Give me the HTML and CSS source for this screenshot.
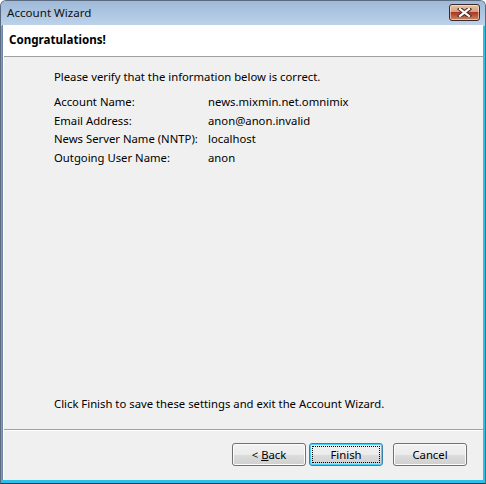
FILE: index.html
```html
<!DOCTYPE html>
<html>
<head>
<meta charset="utf-8">
<link rel="stylesheet" href="styles.css">
</head>
<body>
<div class="window">
  <div class="titlebar">
    <span class="title">Account Wizard</span>
    <button class="close" aria-label="Close">
      <svg width="15" height="9" viewBox="0 0 15 9"><path d="M3 1 L12 8 M12 1 L3 8" stroke="#4a2a22" stroke-width="4.2" stroke-linecap="square"/><path d="M3 1 L12 8 M12 1 L3 8" stroke="#ffffff" stroke-width="2.2" stroke-linecap="square"/></svg>
    </button>
  </div>
  <div class="client">
    <div class="header">Congratulations!</div>
    <div class="body">
      <p class="intro">Please verify that the information below is correct.</p>
      <div class="info">
        <span>Account Name:</span><span>news.mixmin.net.omnimix</span>
        <span>Email Address:</span><span>anon@anon.invalid</span>
        <span>News Server Name (NNTP):</span><span>localhost</span>
        <span>Outgoing User Name:</span><span>anon</span>
      </div>
      <p class="outro">Click Finish to save these settings and exit the Account Wizard.</p>
    </div>
    <div class="footer">
      <button class="btn"><span class="lbl"><span>&lt; <u>B</u>ack</span></span></button>
      <button class="btn default"><span class="lbl focus">Finish</span></button>
      <button class="btn cancel"><span class="lbl">Cancel</span></button>
    </div>
  </div>
</div>
</body>
</html>
```
FILE: styles.css
```css
* { box-sizing: border-box; }
html, body { margin: 0; padding: 0; }
body {
  width: 486px;
  height: 484px;
  overflow: hidden;
  font-family: "Noto Sans", "Open Sans", sans-serif;
  font-size: 11.3px;
  color: #000;
  background: #fff;
}
.window {
  width: 486px;
  height: 484px;
  display: flex;
  flex-direction: column;
  background: linear-gradient(to bottom, #a8c2df 0, #b9cfe8 25px, #2bc1e6 25px);
  border: 1px solid #5a6b80;
  border-bottom-color: #27353f;
  border-radius: 6px 6px 0 0;
  padding: 0 2px 3px 1px;
}
.titlebar {
  height: 24px;
  display: flex;
  align-items: center;
  justify-content: space-between;
  padding: 0 5px 1px 6px;
  background: linear-gradient(to bottom, #9fb9d8, #bcd2ea);
  margin-left: -1px;
  margin-right: -2px;
  border-radius: 5px 5px 0 0;
}
.title {
  font-size: 11.6px;
  color: #111;
}
.close {
  width: 31px;
  height: 17px;
  border: 1px solid #3b2a28;
  border-radius: 3px;
  padding: 0;
  display: flex;
  align-items: center;
  justify-content: center;
  background: linear-gradient(to bottom, #e8c3a6 0, #d6a07a 45%, #a8382a 50%, #b8442e 60%, #c78b63 100%);
  box-shadow: inset 0 0 0 1px rgba(255,235,220,0.6);
}
.close svg { display: block; }
.client {
  flex: 1;
  display: flex;
  flex-direction: column;
  background: #f0f0f0;
  border-left: 1px solid #ffffff;
  box-shadow: -1px 0 0 #6b86a8;
  margin-left: 1px;
}
.header {
  height: 32px;
  padding: 7px 0 0 5px;
  background: #fff;
  font-weight: bold;
  font-size: 11.6px;
  border-bottom: 1px solid #a0a0a0;
}
.body {
  flex: 1;
  display: flex;
  flex-direction: column;
  padding: 11px 0 16px 50px;
  line-height: 18.4px;
}
.body p { margin: 0; }
.info {
  margin-top: 7px;
  display: grid;
  grid-template-columns: 154px auto;
  white-space: nowrap;
}
.outro { margin-top: auto !important; }
.footer {
  height: 51px;
  border-top: 1px solid #a0a0a0;
  box-shadow: inset 0 1px 0 #ffffff;
  display: flex;
  align-items: flex-start;
  padding: 13px 16px 0 0;
  justify-content: flex-end;
  gap: 3px;
}
.btn {
  width: 74px;
  height: 23px;
  border: 1px solid #707070;
  border-radius: 3px;
  background: linear-gradient(to bottom, #f2f2f2 0, #ebebeb 50%, #dddddd 51%, #cfcfcf 100%);
  font-family: inherit;
  font-size: 11.3px;
  color: #000;
  padding: 2px;
  display: flex;
  box-shadow: inset 0 0 0 1px #fcfcfc;
}
.btn .lbl {
  flex: 1;
  display: flex;
  align-items: center;
  justify-content: center;
  white-space: pre;
}
.btn u { text-decoration: underline; text-underline-offset: 1px; }
.btn.default {
  border-color: #3c7fb1;
  box-shadow: inset 0 0 0 1px #48d2f8;
}
.btn .focus { border: 1px dotted #000; }
.btn.cancel { margin-left: 7px; }
```
